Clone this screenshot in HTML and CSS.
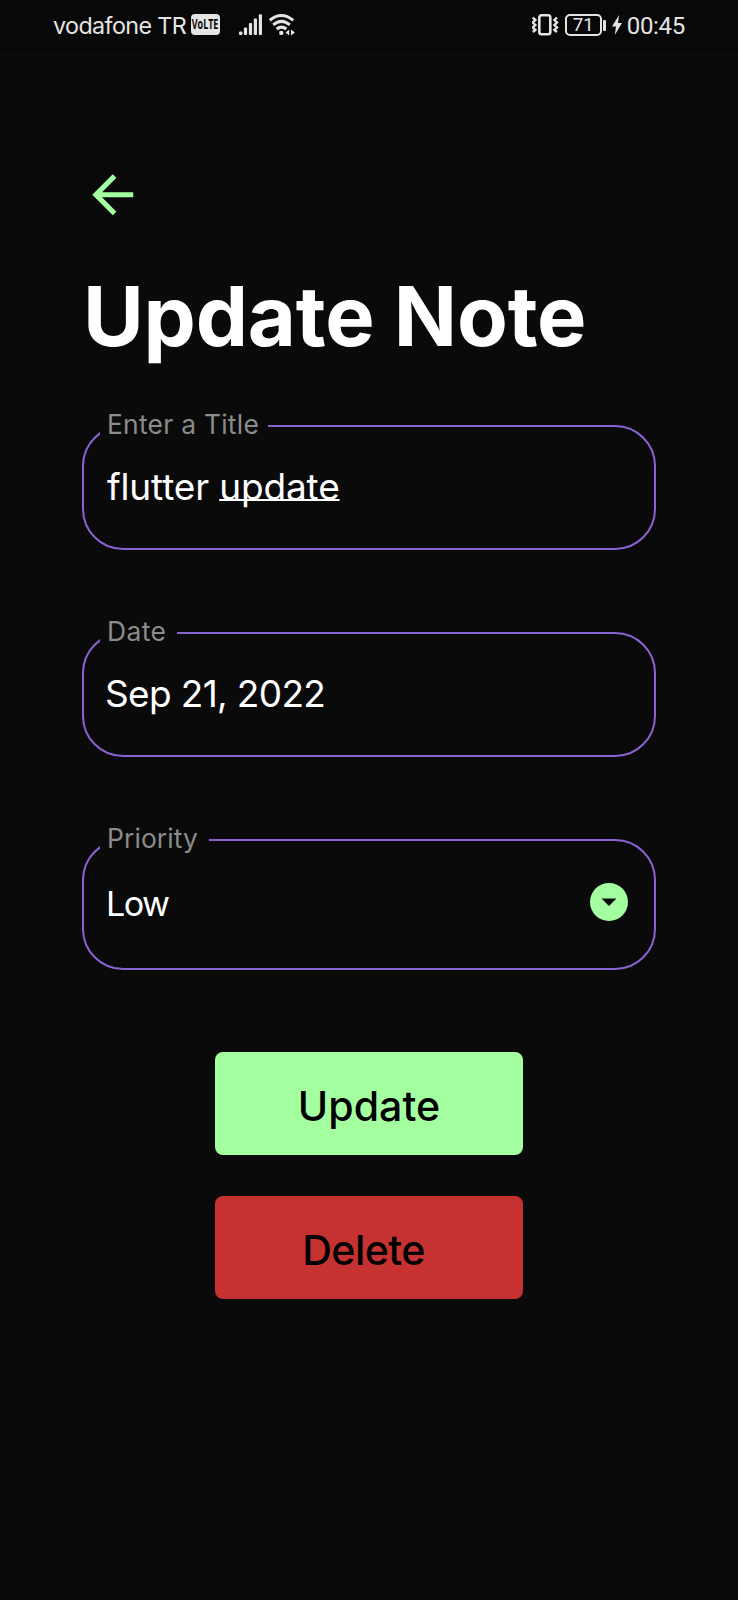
FILE: index.html
```html
<!DOCTYPE html>
<html lang="en">
<head>
<meta charset="utf-8">
<title>Update Note</title>
<link rel="stylesheet" href="styles.css">
</head>
<body>
<header class="status">
  <div class="status-left">
    <span class="carrier">vodafone TR</span>
    <span class="volte"><span class="volte-text">VoLTE</span></span>
    <svg class="signal" width="24" height="22" viewBox="0 0 24 22" fill="#e4e4e4"><rect y="17.500" width="3.400" height="3.600" rx="1"/><rect x="4.900" y="13.500" width="3.200" height="7.600" rx="1"/><rect x="9.900" y="9" width="3.200" height="12.100" rx="1"/><rect x="14.800" y="4.500" width="3.200" height="16.600" rx="1"/><rect x="19.800" y="0.300" width="3.200" height="20.800" rx="1"/></svg>
    <svg class="wifi" width="27" height="22" viewBox="0 0 27 22" fill="none" stroke="#e4e4e4" stroke-width="3"><path d="M0.800 6.300Q12.500-3.200 24.200 6.300M4.200 10.800Q12.500 4 20.800 10.800M7.600 15Q12.500 11.300 17.400 15"/><circle cx="12.300" cy="18.900" r="2.200" fill="#e4e4e4" stroke="none"/><path d="M20.200 15.500v6l-3.700-3zM22 15.500v6l3.900-3z" fill="#e4e4e4" stroke="none"/></svg>
  </div>
  <div class="status-right">
    <svg class="vibrate" width="28" height="22" viewBox="0 0 28 22" fill="none" stroke="#e4e4e4"><rect x="7.300" y="1.300" width="11" height="19" rx="2.200" stroke-width="2.600"/><path d="M0.800 3.500l2.600 2.500-2.600 2.500 2.600 2.500-2.600 2.500 2.600 2.500-2.600 2M25 3.500l-2.600 2.500 2.600 2.500-2.600 2.500 2.600 2.500-2.600 2.500 2.600 2" stroke-width="2.400"/></svg>
    <span class="battery">71</span>
    <span class="battery-tip"></span>
    <svg class="bolt" width="10" height="20" viewBox="0 0 10 20" fill="#e4e4e4"><path d="M7 0L0 11.500h4L2.800 20 10 8H6z"/></svg>
    <span class="clock">00:45</span>
  </div>
</header>
<main class="page">
  <svg class="back" viewBox="0 0 24 24" fill="#a4ffa1"><path d="M20 11H7.830l5.590-5.590L12 4l-8 8 8 8 1.410-1.410L7.830 13H20v-2z"/></svg>
  <h1 class="heading">Update Note</h1>
  <fieldset class="field">
    <legend class="label label-title">Enter a Title</legend>
    <div class="value value-title">flutter <span class="composing">update</span></div>
  </fieldset>
  <fieldset class="field">
    <legend class="label label-date">Date</legend>
    <div class="value value-date">Sep 21, 2022</div>
  </fieldset>
  <fieldset class="field field-select">
    <legend class="label label-priority">Priority</legend>
    <div class="value value-select"><span>Low</span>
      <svg class="chevron" width="38" height="38" viewBox="0 0 38 38"><circle cx="19" cy="19" r="19" fill="#a4ffa1"/><path d="M11.500 15.500h15L19 23z" fill="#0a0a0a"/></svg>
    </div>
  </fieldset>
  <div class="actions">
    <button class="btn btn-update">Update</button>
    <button class="btn btn-delete">Delete</button>
  </div>
</main>
</body>
</html>
```
FILE: styles.css
```css
* { box-sizing: border-box; }
body { margin: 0; height: 1600px; background: #0a0a0a; color: #fff; font-family: Inter, "Liberation Sans", sans-serif; overflow: hidden; }
.status { height: 51px; padding: 0 53px 0 53px; display: flex; justify-content: space-between; line-height: 52px; color: #e4e4e4; background: #080808; }
.status-left, .status-right { display: flex; align-items: flex-start; white-space: nowrap; }
.carrier { width: 138px; font-size: 23.3px; letter-spacing: -0.6px; }
.volte { width: 29px; height: 21px; margin-top: 14px; border-radius: 4px; background: #e4e4e4; color: #080808; display: flex; justify-content: center; }
.volte-text { font: 700 13.5px/21px "Open Sans", sans-serif; transform: scaleX(0.66); }
.signal { margin: 14px 0 0 19px; }
.wifi { margin: 14px 0 0 6px; }
.vibrate { margin-top: 14px; }
.battery { width: 37px; height: 22px; margin: 14px 0 0 5px; border: 2px solid #e4e4e4; border-radius: 5px; font: 18.5px/18px Roboto, sans-serif; text-align: center; }
.battery-tip { width: 3px; height: 11px; margin: 20px 0 0 1px; border-radius: 1px; background: #e4e4e4; }
.bolt { margin: 15px 0 0 6px; }
.clock { margin-left: 5px; font-family: Roboto, sans-serif; font-size: 24px; letter-spacing: -0.3px; }

.page { padding: 113px 82px 0; }
.back { display: block; width: 61.5px; height: 61.5px; }
.heading { margin: 40px 0 0 1px; font-size: 83px; line-height: 100px; font-weight: 700; letter-spacing: -0.2px; white-space: nowrap; }
.field { width: 574px; height: 141px; margin: 43px 0 66px; padding: 0 26px 0 16px; border: 2px solid #8a63d2; border-radius: 41px; }
.field + .field { margin-top: 0; }
.field-select { height: 147px; margin-bottom: 82px; }
.label { height: 34px; padding: 0 10px 3px 7px; font-size: 26.4px; line-height: 31px; color: #8b8b8b; }
.label-title { padding-right: 9px; letter-spacing: 0.26px; }
.label-date { padding-right: 11px; letter-spacing: 0.4px; }
.label-priority { padding-right: 11px; letter-spacing: 0.1px; }
.value { padding: 21px 0 0 7px; font-size: 37px; line-height: 46px; }
.value-title { letter-spacing: -0.15px; }
.value-date { padding-left: 5px; letter-spacing: -0.65px; }
.composing { text-decoration: underline; text-decoration-thickness: 2px; text-underline-offset: -1px; text-decoration-skip-ink: none; }
.value-select { display: flex; align-items: center; justify-content: space-between; padding-top: 24px; padding-left: 6px; font-size: 34.2px; letter-spacing: -1.6px; }
.chevron { margin-bottom: 3px; }
.actions { display: flex; flex-direction: column; align-items: center; gap: 41px; }
.btn { width: 308px; height: 103px; padding: 6px 0 0; border: 0; border-radius: 8px; font: 500 41.1px/50px Inter, sans-serif; color: #000; }
.btn-update { background: #a4ffa1; }
.btn-delete { padding-right: 11px; letter-spacing: -0.6px; background: #c63232; }
```
